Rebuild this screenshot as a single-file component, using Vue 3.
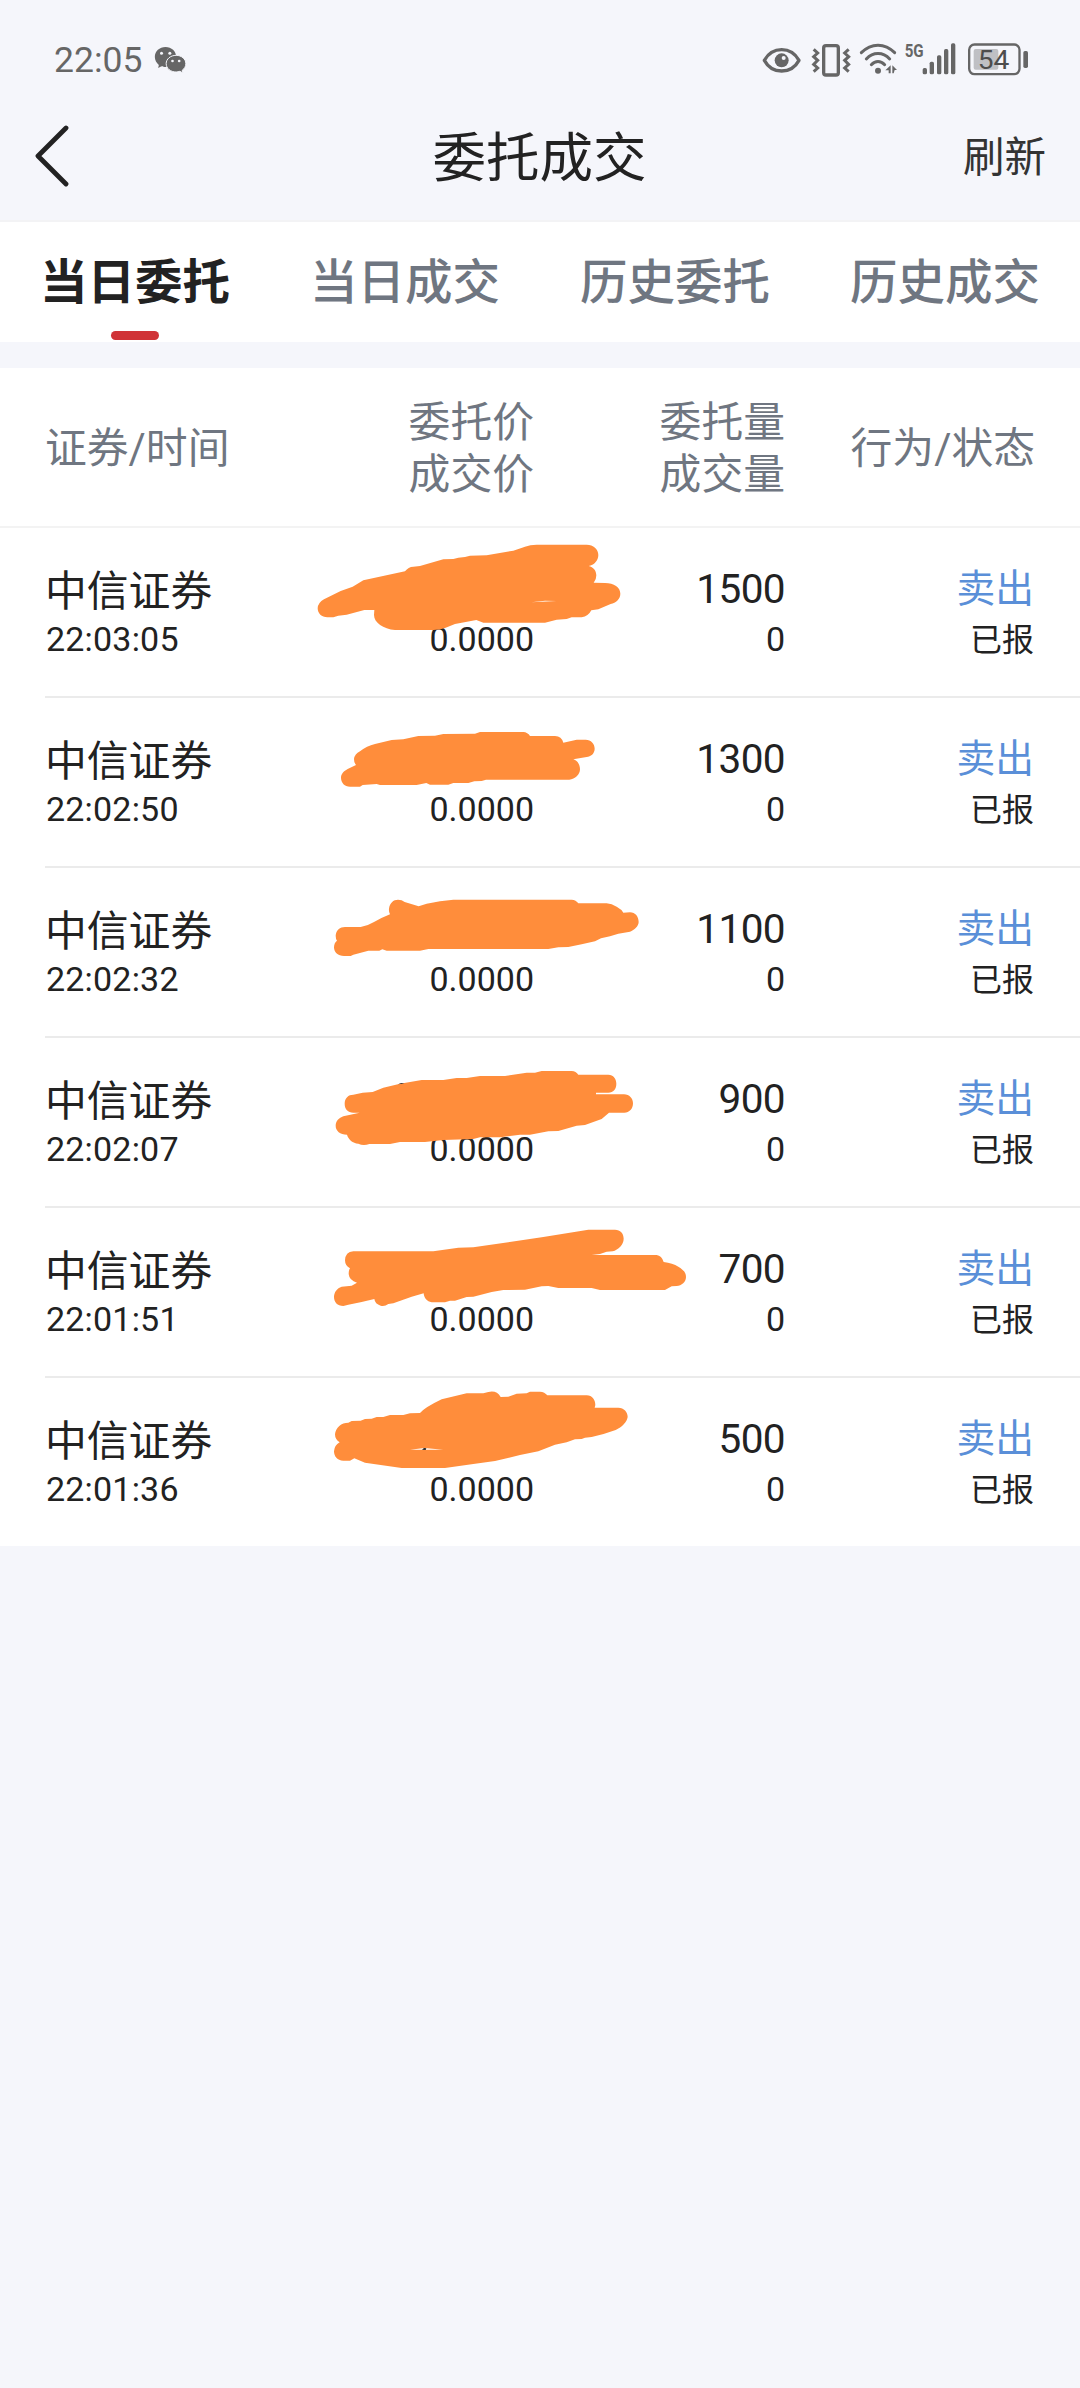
<template>
  <div class="page">
    <!-- 状态栏 -->
    <div class="status-bar">
      <span class="status-time">22:05</span>
      <svg class="icon-wechat" viewBox="462 78 98 84">
        <path d="M496 81c-18 0-32 13-32 30 0 10 5 18 12 24l-2 9 10-5c4 2 8 2 12 2 18 0 32-13 32-30s-14-30-32-30z" fill="#666"/>
        <path d="M528 106c-17 0-30 11-30 25s13 25 30 25c4 0 7-1 11-2l10 5-3-8c7-5 11-12 11-20 0-14-13-25-29-25z"
              fill="#666" stroke="#f5f6fb" stroke-width="3"/>
        <circle cx="484" cy="100" r="4.5" fill="#f5f6fb"/>
        <circle cx="509" cy="100" r="4.5" fill="#f5f6fb"/>
        <circle cx="517" cy="123" r="4" fill="#f5f6fb"/>
        <circle cx="537" cy="123" r="4" fill="#f5f6fb"/>
      </svg>
      <div class="status-icons">
        <svg class="icon-eye" viewBox="66 66 132 108">
          <path d="M73 121C85 100 104 89 125 89s40 11 52 32c-12 22-31 32-52 32s-40-10-52-32z" fill="none"
                stroke="#666" stroke-width="10" stroke-linejoin="round"/>
          <circle cx="125" cy="121" r="21" fill="#666"/>
          <circle cx="131" cy="114" r="6" fill="#f5f6fb"/>
        </svg>
        <svg class="icon-vibrate" viewBox="198 66 150 108">
          <rect x="251" y="77" width="44" height="88" rx="7" fill="none" stroke="#666" stroke-width="10"/>
          <path d="M221 88l12 11-12 11 12 11-12 12 12 11-12 11" fill="none" stroke="#666" stroke-width="9"/>
          <path d="M326 88l-12 11 12 11-12 11 12 12-12 11 12 11" fill="none" stroke="#666" stroke-width="9"/>
        </svg>
        <svg class="icon-wifi" viewBox="348 66 138 108">
          <g fill="none" stroke="#666" stroke-width="9" stroke-linecap="round">
            <path d="M364 98c30-30 70-30 100 0"/>
            <path d="M379 117c20-22 50-22 70 0"/>
            <path d="M394 134c12-13 28-13 40 0"/>
          </g>
          <circle cx="414" cy="152" r="9" fill="#666"/>
          <path d="M452 136v24h-6v-9h-10zM457 136l14 14h-7l-3 10h-4z" fill="#666"/>
        </svg>
        <svg class="icon-signal" viewBox="486 60 180 120">
          <text x="494" y="112" font-size="55" font-weight="700" textLength="57" lengthAdjust="spacingAndGlyphs"
                fill="#666">5G</text>
          <rect x="548" y="144" width="13" height="19" rx="5" fill="#666"/>
          <rect x="569" y="125" width="13" height="38" rx="5" fill="#666"/>
          <rect x="591" y="106" width="13" height="57" rx="5" fill="#666"/>
          <rect x="612" y="87" width="13" height="76" rx="5" fill="#666"/>
          <rect x="633" y="70" width="13" height="93" rx="5" fill="#666"/>
        </svg>
        <svg class="icon-battery" viewBox="666 66 204 108">
          <rect x="687.500" y="73.500" width="151" height="89" rx="16" fill="none" stroke="#666" stroke-width="7"/>
          <rect x="701" y="87" width="74" height="62" rx="6" fill="#bfc0c4"/>
          <rect x="850" y="93" width="14" height="51" rx="5" fill="#666"/>
          <text x="713" y="146" font-size="76" textLength="95" lengthAdjust="spacingAndGlyphs" fill="#4d4d4d">54</text>
        </svg>
      </div>
    </div>

    <!-- 导航栏 -->
    <div class="nav-bar">
      <svg class="nav-back" viewBox="0 0 36 64">
        <path d="M31 4L3 32l28 28" fill="none" stroke="#222" stroke-width="4.800" stroke-linecap="round"
              stroke-linejoin="round"/>
      </svg>
      <h1 class="nav-title">委托成交</h1>
      <span class="nav-refresh">刷新</span>
    </div>

    <!-- 标签 -->
    <ul class="tabs">
      <li v-for="(item, index) in tabs" :key="index" :class="{'tab-item':true,'tab-active':index===active}"
          @click="active = index">
        <span>{{ item }}</span>
      </li>
    </ul>

    <!-- 表头 -->
    <div class="table-head">
      <div class="head-cell head-left">证券/时间</div>
      <div class="head-cell">委托价<br>成交价</div>
      <div class="head-cell">委托量<br>成交量</div>
      <div class="head-cell">行为/状态</div>
    </div>

    <!-- 委托列表 -->
    <ul class="order-list">
      <li class="order-item" v-for="(item, index) in orders" :key="index">
        <div class="cell cell-left">
          <p class="order-name">{{ item.name }}</p>
          <p class="num-small order-time">{{ item.time }}</p>
        </div>
        <div class="cell">
          <p></p>
          <p class="num-small">{{ item.dealPrice }}</p>
        </div>
        <div class="cell">
          <p class="num-big">{{ item.amount }}</p>
          <p class="num-small">{{ item.dealAmount }}</p>
        </div>
        <div class="cell">
          <p class="order-action">{{ item.action }}</p>
          <p class="order-state">{{ item.state }}</p>
        </div>
        <svg class="scribble" viewBox="0 0 1200 510">
          <g :transform="`translate(0 ${item.offset})`">
            <path :d="item.mark" fill="#ff8d3b" fill-rule="evenodd"/>
            <path v-if="item.speck" :d="item.speck" fill="#222"/>
          </g>
        </svg>
      </li>
    </ul>
  </div>
</template>

<script setup>
import {ref} from "vue";

const tabs = ['当日委托', '当日成交', '历史委托', '历史成交']
//当前标签
let active = ref(0)

const order = (time, amount, offset, mark, speck) => ({
  name: '中信证券',
  time,
  amount,
  dealPrice: '0.0000',
  dealAmount: '0',
  action: '卖出',
  state: '已报',
  //涂抹的纵向偏移和路径
  offset,
  mark,
  speck
})

const orders = [
  order('22:03:05', '1500', 6, 'M82 262C65 262 53 250 53 235Q54 218 72 208L122 183L158 170L190 151L315 124Q325 110 340 110L360 108L430 88L460 87L475 83L495 81L510 77L560 76L640 62L675 50Q690 44 710 44L860 44C880 44 895 58 895 75C895 92 882 106 866 108C880 111 889 122 889 136Q889 150 881 158L915 159C942 159 961 172 961 191C961 207 948 218 932 222L895 238L874 241Q865 259 845 262L815 262L800 267L770 269L735 278L550 278L529 270L465 282L435 294Q420 300 400 300L285 300C250 297 222 278 222 255L223 240L193 240L140 254L115 257L100 262ZM694 217L770 213L735 212Z'),
  order('22:02:50', '1300', 36, 'M150 230C134 230 123 218 123 203C123 190 134 182 143 177L168 165Q162 158 162 147Q164 132 180 124Q200 108 225 102L275 90L310 88L355 78L405 77L430 72L525 71L540 66L670 66Q683 67 690 78L765 78Q785 79 790 98L830 89L857 89C873 89 884 101 884 116C884 131 872 140 860 141L820 148C832 152 840 163 840 178C840 194 825 208 808 209L558 209L545 213L523 214L505 219L460 219L445 224L390 224L379 219L350 225L240 225L230 222L188 225L180 230Z'),
  order('22:02:32', '1100', 36, 'M132 228C114 228 102 217 102 202Q102 189 111 182Q107 176 107 167C108 151 120 141 135 141L182 141Q202 138 222 126Q245 113 270 103Q266 97 267 86C269 69 280 59 294 59Q306 59 314 66L356 79L380 71L420 64L460 59L815 59Q828 60 835 70L920 70Q935 71 950 80Q965 88 970 98L990 97C1006 97 1016 110 1016 126C1016 139 1003 150 990 155L955 161L930 169L903 175L885 184L845 193L805 201L775 202L745 207L385 207L360 212L260 212L247 208L238 212L205 212L160 224L152 228Z'),
  order('22:02:07', '900', 36, 'M160 188C144 188 134 177 134 161C134 144 145 134 160 134L188 128L218 126L250 113L300 101L365 90L430 90L470 84L500 84L540 78L615 78L680 68L705 68L725 63L815 63Q828 64 835 74L925 74C940 74 949 86 949 101C949 117 940 128 925 128L888 128L888 133L972 133C988 133 999 145 999 160C999 177 988 188 973 188L927 188L905 207L880 216L855 225L830 227L775 243L745 244L690 254L660 254L600 262L540 262L520 267L430 270L375 276L300 276L270 282L208 282Q190 289 175 281C158 280 145 268 141 254C120 253 107 243 107 227C107 213 117 204 130 199L179 188Z', 'M294 103L304 99L313 99L306 101Z'),
  order('22:01:51', '700', 6, 'M130 288C112 288 102 276 102 261C102 247 111 234 125 230L155 227L171 218Q148 212 146 192Q146 181 150 175Q135 167 135 151Q136 126 160 124L400 124L475 113L520 112L730 81L865 59L945 59C961 59 971 70 971 86C971 104 955 119 938 124L920 125L900 132L875 135L1070 135Q1085 137 1091 156Q1118 159 1135 170C1151 180 1158 188 1158 201C1158 216 1145 227 1130 228L1115 229L1095 240L900 240L875 234L775 234L745 228L725 229L675 239L610 240L575 246L520 260L500 261L465 272L450 272L435 277L395 277C381 275 372 264 371 250L335 260L280 280L265 282Q254 290 242 287Q225 282 223 267L185 276L145 284Z'),
  order('22:01:36', '500', -24, 'M130 272C112 272 102 259 102 244Q103 226 119 217Q105 208 105 193C107 172 124 158 145 158L155 153L182 152L195 147L215 146L230 141L250 141L270 135L310 135L330 130L360 129Q375 112 425 88L500 70L550 70L565 66Q590 60 602 81L625 80L650 71L680 70L690 65L720 65Q734 66 742 76L860 76C877 76 886 90 886 105L884 113L955 113C972 113 983 126 983 141C981 156 966 171 947 180Q915 192 875 201L855 203L845 207L825 208L800 217L765 224L715 244L660 255L585 273L520 282L435 294L305 294L195 278L163 265L150 272ZM330 239L373 234L430 239Z', 'M366 239L372 234L379 235L377 240Z')
]
</script>

<style>
body {
  background-color: #f5f6fb;
}
</style>

<style scoped>
.page {
  width: 1080px;
  min-height: 2388px;
  background-color: #f5f6fb;
  color: #222;
  font-family: Roboto, "Noto Sans CJK SC", sans-serif;
}

ul, p, h1 {
  margin: 0;
  padding: 0;
  list-style: none;
}

svg {
  display: block;
}

/*状态栏*/
.status-bar {
  display: flex;
  align-items: center;
  height: 36px;
  padding: 42px 50px 0 54px;
}

.status-time {
  width: 100px;
  color: #666;
  font-size: 35.5px;
  font-weight: 450;
  line-height: 34px;
}

.icon-wechat {
  width: 33px;
  height: 28px;
}

.status-icons {
  display: flex;
  align-items: center;
  margin-left: auto;
}

.status-icons svg {
  height: 36px;
}

.icon-eye {
  width: 44px;
}

.icon-vibrate {
  width: 50px;
}

.icon-wifi {
  width: 46px;
}

.status-icons .icon-signal {
  width: 60px;
  height: 40px;
}

.icon-battery {
  width: 68px;
}

/*导航栏*/
.nav-bar {
  display: grid;
  grid-template-columns: 1fr auto 1fr;
  align-items: center;
  height: 142px;
  padding: 0 34px 0 33px;
  border-bottom: 2px solid #f3f3f5;
}

.nav-back {
  width: 36px;
  height: 64px;
  margin-top: 14px;
  margin-left: 2px;
}

.nav-title {
  margin-top: 8px;
  font-size: 53.5px;
  font-weight: 400;
}

.nav-refresh {
  margin-top: 10px;
  color: #333;
  font-size: 41.5px;
  text-align: right;
}

/*标签*/
.tabs {
  display: flex;
  height: 120px;
  background-color: #fff;
}

.tab-item {
  display: flex;
  flex: 1;
  flex-direction: column;
  align-items: center;
  color: #6f7681;
  font-size: 47.5px;
  font-weight: 500;
  line-height: 110px;
  padding-top: 6px;
  cursor: pointer;
}

.tab-active {
  color: #222;
  font-weight: 700;
}

.tab-active::after {
  content: "";
  width: 48px;
  height: 9px;
  margin-top: -7px;
  border-radius: 5px;
  background-color: #d03337;
}

/*表头*/
.table-head {
  display: grid;
  grid-template-columns: 240px 249px 251px 250px;
  align-items: center;
  height: 155px;
  margin-top: 26px;
  padding: 3px 45px 0;
  border-bottom: 2px solid #f3f3f3;
  background-color: #fff;
}

.head-cell {
  color: #6f7681;
  font-size: 41.8px;
  line-height: 52px;
  text-align: right;
}

.head-left {
  text-align: left;
}

/*委托列表*/
.order-list {
  padding-left: 45px;
  background-color: #fff;
}

.order-item {
  position: relative;
  display: grid;
  grid-template-columns: 240px 249px 251px 250px;
  padding: 36px 0 32px;
  border-bottom: 2px solid #ebebeb;
}

.order-item:last-child {
  border-bottom: 0;
}

.cell {
  text-align: right;
}

.cell-left {
  text-align: left;
}

.cell p {
  height: 50px;
  line-height: 50px;
}

.cell .order-name {
  font-size: 41.8px;
  line-height: 55px;
}

.num-big {
  font-size: 40.5px;
  letter-spacing: -0.6px;
}

.num-small {
  font-size: 34px;
}

.order-time {
  padding-left: 1px;
  letter-spacing: 0.2px;
}

.order-action {
  color: #5a8fd8;
  font-size: 38.8px;
}

.cell .order-state {
  font-size: 32px;
  line-height: 52px;
}

.order-action, .order-state {
  padding-right: 1px;
}

/*涂抹遮挡*/
.scribble {
  position: absolute;
  top: 0;
  left: 255px;
  width: 400px;
  height: 170px;
  overflow: visible;
}
</style>
